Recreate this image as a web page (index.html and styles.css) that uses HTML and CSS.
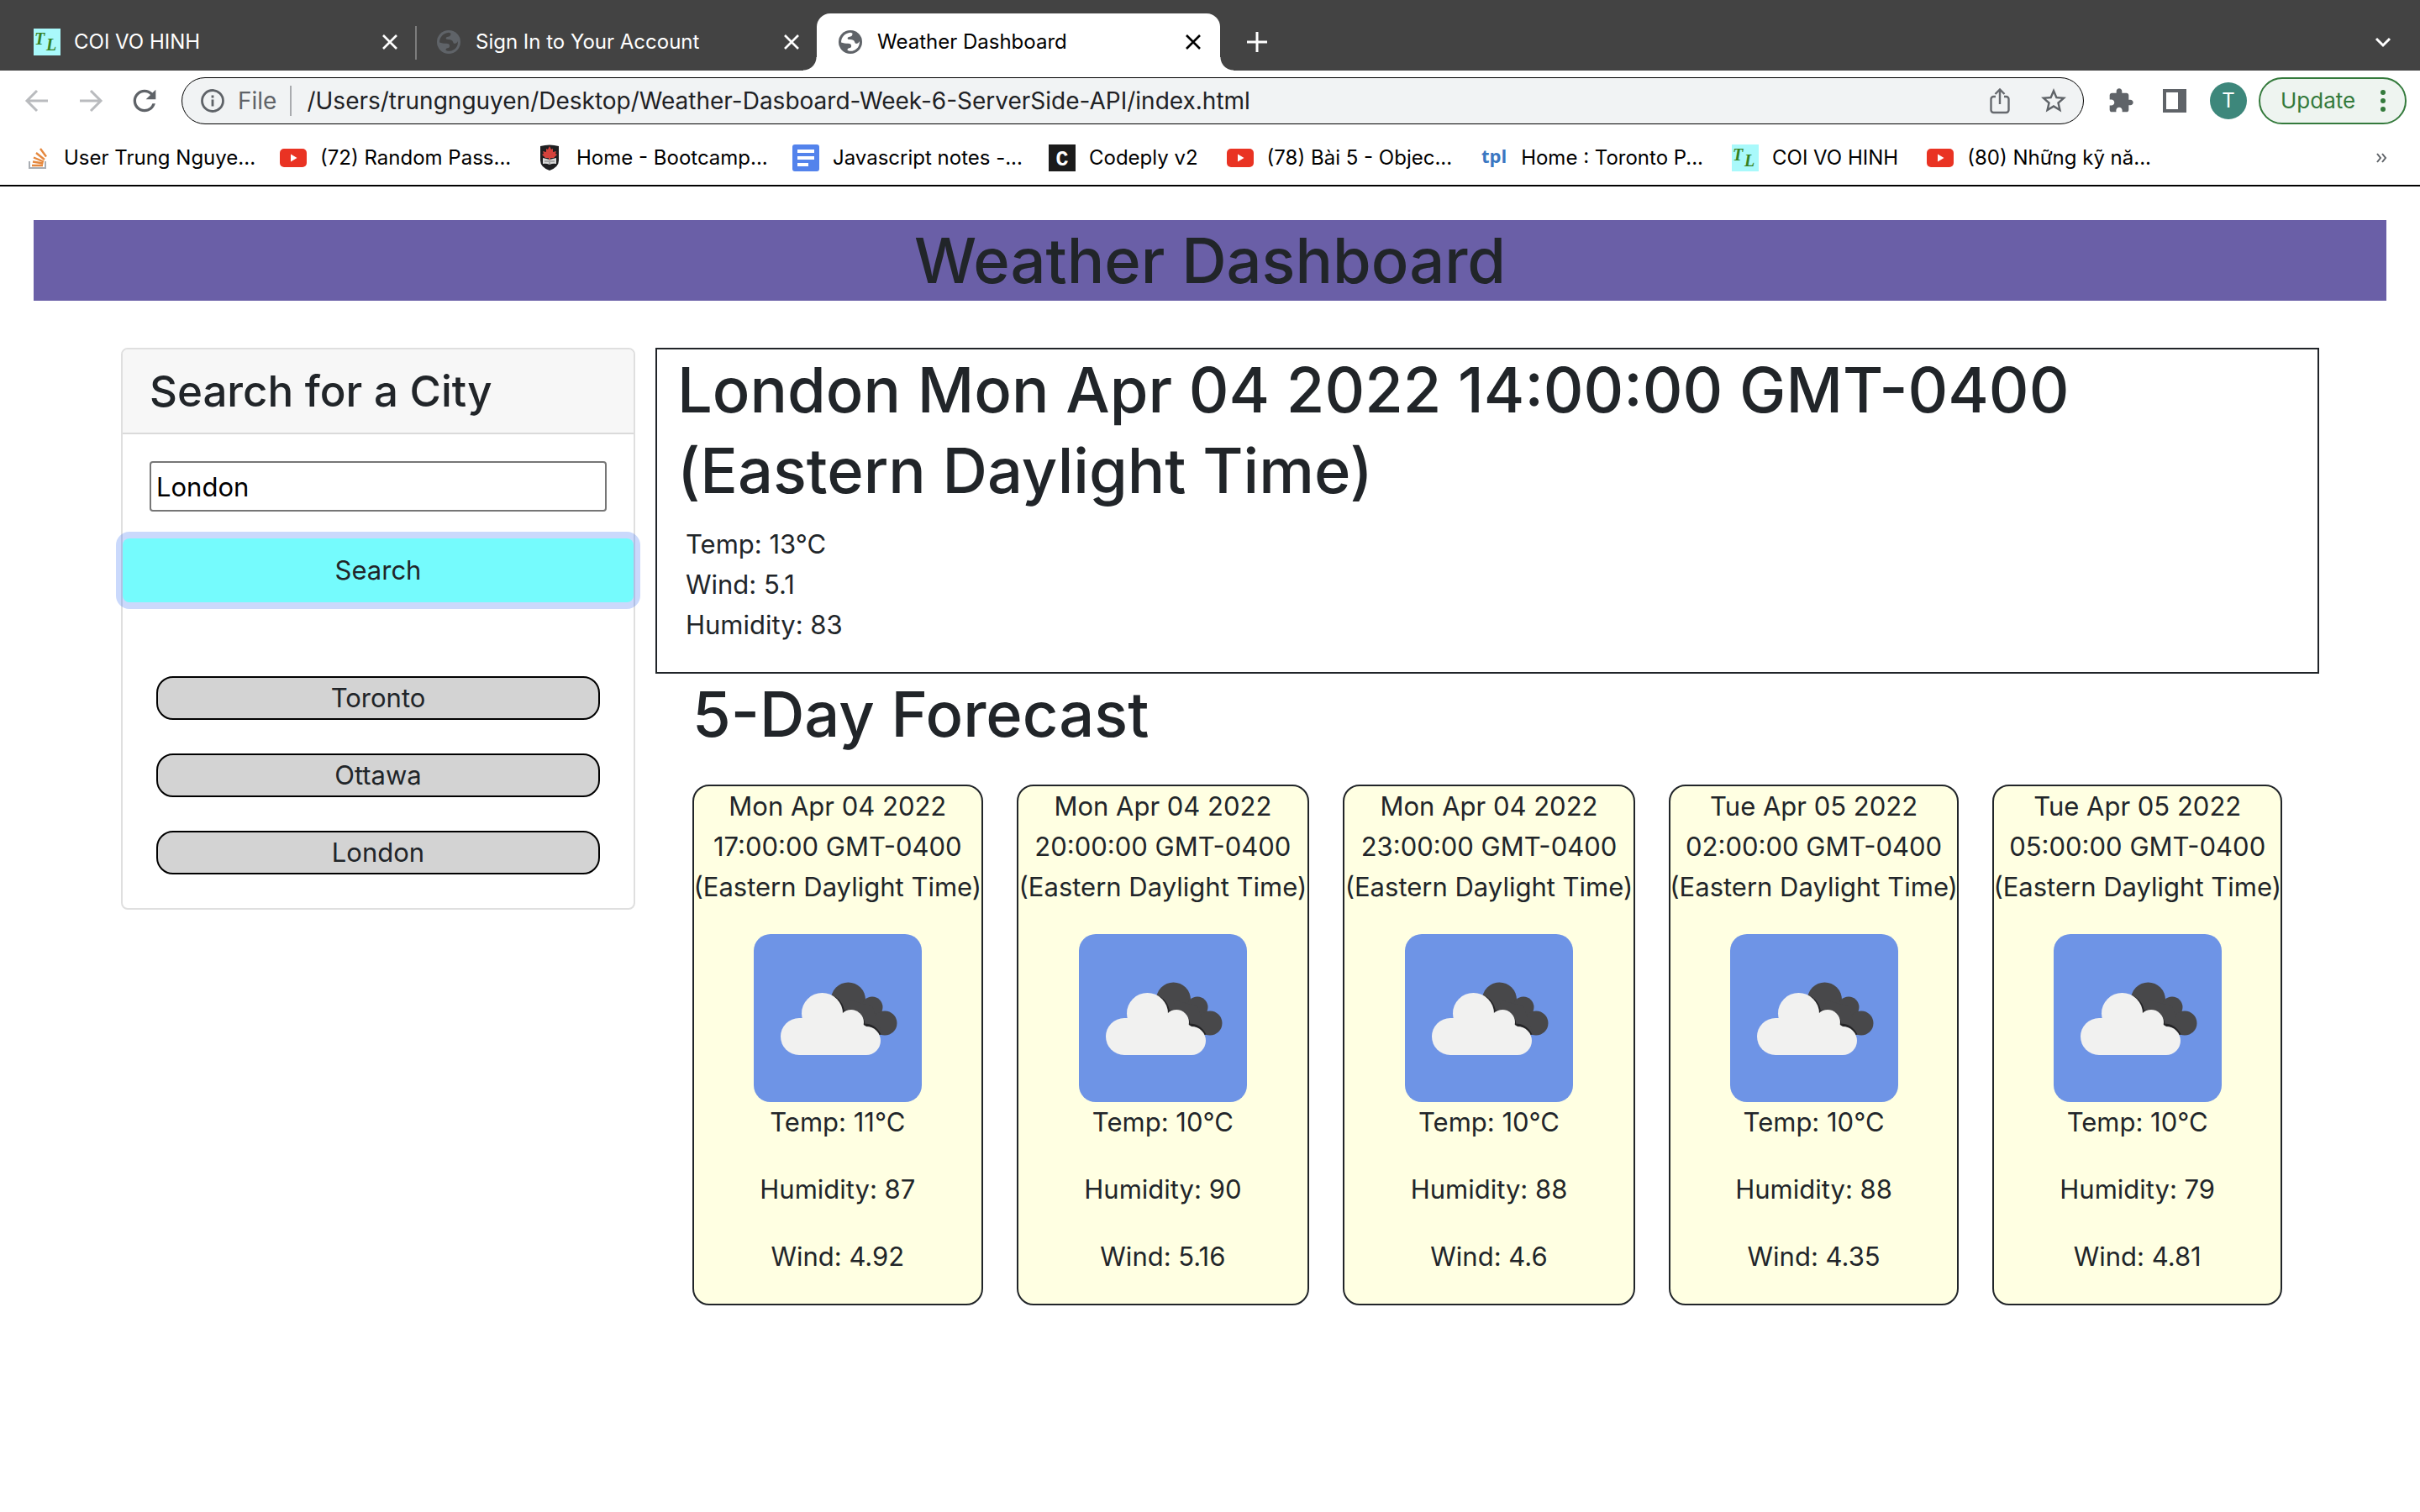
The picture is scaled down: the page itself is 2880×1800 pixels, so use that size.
FILE: index.html
```html
<!DOCTYPE html>
<html lang="en">
<head>
<meta charset="utf-8">
<meta name="viewport" content="width=device-width, initial-scale=1">
<title>Weather Dashboard</title>
<link rel="stylesheet" href="styles.css">
</head>
<body>
<svg class="sprite" aria-hidden="true">
  <symbol id="close" viewBox="0 0 20 20"><path d="M2 2l16 16M18 2L2 18" fill="none" stroke="currentColor" stroke-width="2.6"/></symbol>
  <symbol id="globe" viewBox="0 0 24 24">
    <circle class="globe-sea" cx="12" cy="12" r="12"/>
    <path class="globe-land" d="M2.6 12.4C2.6 7 6.5 3 12 2.4l2 .6c.4 1.6-.4 3-1.8 3.4-1.300.3-2.700.3-3 1.400-.3 1.200.6 1.700 2 1.700 2.600-.1 4.600.5 5.200 2.500.3 1.300 1.200 1.900 2.600 1.500 1.300-.4 2-1.500 2.200-2.600.9 5.200-2.900 10-8.400 10.300-1.800.1-3.200-.3-3.800-.8 0-1.300.6-1.800 1.800-2.100 1.700-.4 2.300-1.300 2.100-2.700-.2-1.500-1.400-2-3.200-2.100-2.800-.1-4.900-.4-7.100-1.100z"/>
  </symbol>
  <symbol id="youtube" viewBox="0 0 32 22"><rect width="32" height="22" rx="5" fill="#e93323"/><path d="M13 6.500v9l7.500-4.500z" fill="#fff"/></symbol>
  <symbol id="clouds" viewBox="0 0 200 200">
    <rect width="200" height="200" rx="20" fill="#6e94e6"/>
    <g fill="#48484a"><circle cx="112.500" cy="78" r="20.500"/><circle cx="141" cy="87" r="12.500"/><circle cx="156" cy="106" r="14.500"/><path d="M112 78l29 8 12 34-30-8z"/></g>
    <path d="M92 74c8 3 14 10 14.500 19 12-5 23 1 24.500 15 8 0 15 4 19 12" fill="none" stroke="#242426" stroke-width="3"/>
    <g fill="#f1f1f0"><circle cx="54" cy="122" r="22"/><circle cx="81.500" cy="94.500" r="24.500"/><circle cx="116" cy="105" r="15"/><circle cx="134" cy="127" r="17"/><path d="M54 100h64l16 10v34H54z"/></g>
  </symbol>
</svg>

<header class="browser">
  <div class="tabs">
    <div class="tab">
      <svg class="ico-32" viewBox="0 0 32 32"><rect width="32" height="32" fill="#a9f9fb"/><text class="monogram-text" x="1" y="19">T</text><text class="monogram-text" x="15" y="26">L</text></svg>
      <span class="tab-title">COI VO HINH</span>
      <button class="tab-close" aria-label="Close COI VO HINH"><svg class="ico-20"><use href="#close"/></svg></button>
    </div>
    <div class="tab tab-divided">
      <svg class="ico-32 globe globe-dim"><use href="#globe"/></svg>
      <span class="tab-title">Sign In to Your Account</span>
      <button class="tab-close" aria-label="Close Sign In to Your Account"><svg class="ico-20"><use href="#close"/></svg></button>
    </div>
    <div class="tab tab-active">
      <svg class="ico-32 globe"><use href="#globe"/></svg>
      <span class="tab-title">Weather Dashboard</span>
      <button class="tab-close" aria-label="Close Weather Dashboard"><svg class="ico-20"><use href="#close"/></svg></button>
    </div>
    <button class="new-tab" aria-label="New tab"><svg class="ico-24" viewBox="0 0 24 24"><path d="M12 0v24M0 12h24" stroke="#fff" stroke-width="3"/></svg></button>
    <button class="tab-menu" aria-label="Search tabs"><svg class="ico-20" viewBox="0 0 20 20"><path d="M2 6l8 8 8-8" fill="none" stroke="#fff" stroke-width="3"/></svg></button>
  </div>

  <div class="toolbar">
    <div class="nav">
      <button aria-label="Back"><svg class="ico-32" viewBox="0 0 32 32"><path d="M29 16H4M16 4L4 16l12 12" fill="none" stroke="#b9bbbe" stroke-width="3"/></svg></button>
      <button aria-label="Forward"><svg class="ico-32" viewBox="0 0 32 32"><path d="M3 16h25M16 4l12 12-12 12" fill="none" stroke="#b9bbbe" stroke-width="3"/></svg></button>
      <button aria-label="Reload"><svg class="ico-40" viewBox="0 0 24 24"><path fill="#5f6368" d="M17.650 6.350A7.958 7.958 0 0 0 12 4c-4.420 0-7.990 3.580-7.990 8s3.570 8 7.990 8c3.730 0 6.840-2.550 7.730-6h-2.080A5.990 5.990 0 0 1 12 18c-3.310 0-6-2.690-6-6s2.690-6 6-6c1.660 0 3.140.69 4.220 1.780L13 11h7V4l-2.350 2.350z"/></svg></button>
    </div>
    <div class="omnibox">
      <svg class="info" viewBox="0 0 28 28"><circle cx="14" cy="14" r="12.500" fill="none" stroke="#5f6368" stroke-width="2.800"/><path d="M14 12.500v8M14 7.500v3" stroke="#5f6368" stroke-width="2.800"/></svg>
      <label class="scheme" for="url">File</label>
      <input class="url" id="url" type="text" value="/Users/trungnguyen/Desktop/Weather-Dasboard-Week-6-ServerSide-API/index.html">
      <button aria-label="Share"><svg class="ico-32" viewBox="0 0 32 32"><path d="M11 11H8.500a3 3 0 0 0-3 3v13a3 3 0 0 0 3 3h15a3 3 0 0 0 3-3V14a3 3 0 0 0-3-3H21M16 20V3M10.500 8L16 2.500 21.500 8" fill="none" stroke="#66696e" stroke-width="2.400"/></svg></button>
      <button aria-label="Bookmark this page"><svg class="ico-36" viewBox="0 0 24 24"><path fill="#5f6368" d="M22 9.240l-7.190-.62L12 2 9.190 8.630 2 9.240l5.460 4.730L5.820 21 12 17.270 18.180 21l-1.630-7.030L22 9.240zM12 15.400l-3.760 2.270 1-4.280-3.320-2.880 4.380-.38L12 6.100l1.710 4.040 4.380.38-3.320 2.880 1 4.280L12 15.400z"/></svg></button>
    </div>
    <div class="tools">
      <button aria-label="Extensions"><svg class="ico-32" viewBox="0 0 24 24"><path fill="#5f6368" d="M20.500 11H19V7c0-1.100-.9-2-2-2h-4V3.500C13 2.120 11.880 1 10.500 1S8 2.120 8 3.500V5H4c-1.100 0-1.990.9-1.990 2v3.800H3.500c1.490 0 2.700 1.210 2.700 2.700s-1.210 2.700-2.700 2.700H2V20c0 1.100.9 2 2 2h3.800v-1.500c0-1.490 1.210-2.700 2.700-2.700 1.490 0 2.700 1.210 2.700 2.700V22H17c1.100 0 2-.9 2-2v-4h1.500c1.380 0 2.500-1.120 2.500-2.500S21.880 11 20.500 11z"/></svg></button>
      <button aria-label="Side panel"><svg class="ico-32" viewBox="0 0 32 32"><path fill="#5f6368" fill-rule="evenodd" d="M2 2h28v28H2zM6 6v20h14V6z"/></svg></button>
      <button class="avatar">T</button>
    </div>
    <button class="update">Update<svg class="dots" viewBox="0 0 8 28"><g fill="#347a3c"><circle cx="4" cy="4" r="3"/><circle cx="4" cy="14" r="3"/><circle cx="4" cy="24" r="3"/></g></svg></button>
  </div>

  <nav class="bookmarks">
    <a href="#"><svg class="ico-32" viewBox="0 0 32 32"><path d="M7 20v8h19v-8" fill="none" stroke="#a9adb3" stroke-width="2"/><path d="M10 25h13M11 20.500l12.500 2M12 15.500l12 5M15 10l10 8M20 5l7 9.500" stroke="#e5883e" stroke-width="2.400"/></svg><span class="long">User Trung Nguye...</span></a>
    <a href="#"><svg class="ico-32"><use href="#youtube"/></svg><span class="long">(72) Random Pass...</span></a>
    <a href="#"><svg class="ico-32" viewBox="0 0 32 32"><path d="M5 2q11-3 22 0v17q0 8-11 12Q5 27 5 19z" fill="#1f1f21"/><path d="M16 2l2 4 2-1v4l4-1-1 3 2 1-4 4h-4v2h-2v-2h-4l-4-4 2-1-1-3 4 1V5l2 1z" fill="#d5423c"/><path d="M8 16l8 2 8-2v7q-4-1-8 1-4-2-8-1z" fill="#d9d9d9"/><path d="M16 18v6M10 20h5M17 20h5" stroke="#777" stroke-width="1"/></svg><span class="long">Home - Bootcamp...</span></a>
    <a href="#"><svg class="ico-32" viewBox="0 0 32 32"><rect width="32" height="32" rx="3" fill="#5383ec"/><path d="M6 8h20M6 16h20M6 24h13" stroke="#fff" stroke-width="4"/></svg><span class="long">Javascript notes -...</span></a>
    <a href="#"><svg class="ico-32" viewBox="0 0 32 32"><rect width="32" height="32" fill="#1b1b1b"/><text class="c-mark" x="16" y="25">C</text></svg><span>Codeply v2</span></a>
    <a href="#"><svg class="ico-32"><use href="#youtube"/></svg><span>(78) Bài 5 - Objec...</span></a>
    <a href="#"><svg class="ico-32" viewBox="0 0 32 32"><text class="tpl-mark" x="16" y="22">tpl</text></svg><span>Home : Toronto P...</span></a>
    <a href="#"><svg class="ico-32" viewBox="0 0 32 32"><rect width="32" height="32" fill="#a9f9fb"/><text class="monogram-text" x="1" y="19">T</text><text class="monogram-text" x="15" y="26">L</text></svg><span>COI VO HINH</span></a>
    <a href="#"><svg class="ico-32"><use href="#youtube"/></svg><span>(80) Những kỹ nă...</span></a>
    <button class="more" aria-label="More bookmarks"><svg class="ico-16" viewBox="0 0 16 16"><path d="M3 3l4 5-4 5M9 3l4 5-4 5" fill="none" stroke="#5f6368" stroke-width="2"/></svg></button>
  </nav>
</header>

<main class="page">
  <h1 class="banner">Weather Dashboard</h1>
  <div class="columns">
    <aside class="search-card">
      <h3 class="search-head"><label for="city">Search for a City</label></h3>
      <div class="search-body"><input class="city" id="city" type="text" value="London"></div>
      <button class="search-btn">Search</button>
      <ul class="history">
        <li><button>Toronto</button></li>
        <li><button>Ottawa</button></li>
        <li><button>London</button></li>
      </ul>
    </aside>
    <div class="results">
      <section class="current">
        <h1>London Mon Apr 04 2022 14:00:00 GMT-0400 (Eastern Daylight Time)</h1>
        <p>Temp: 13°C</p>
        <p>Wind: 5.1</p>
        <p>Humidity: 83</p>
      </section>
      <section class="forecast">
        <h1>5-Day Forecast</h1>
        <div class="days">
          <article class="day"><p>Mon Apr 04 2022<br>17:00:00 GMT-0400<br>(Eastern Daylight Time)</p><svg role="img" aria-label="Broken clouds"><use href="#clouds"/></svg><p>Temp: 11°C</p><p>Humidity: 87</p><p>Wind: 4.92</p></article>
          <article class="day"><p>Mon Apr 04 2022<br>20:00:00 GMT-0400<br>(Eastern Daylight Time)</p><svg role="img" aria-label="Broken clouds"><use href="#clouds"/></svg><p>Temp: 10°C</p><p>Humidity: 90</p><p>Wind: 5.16</p></article>
          <article class="day"><p>Mon Apr 04 2022<br>23:00:00 GMT-0400<br>(Eastern Daylight Time)</p><svg role="img" aria-label="Broken clouds"><use href="#clouds"/></svg><p>Temp: 10°C</p><p>Humidity: 88</p><p>Wind: 4.6</p></article>
          <article class="day"><p>Tue Apr 05 2022<br>02:00:00 GMT-0400<br>(Eastern Daylight Time)</p><svg role="img" aria-label="Broken clouds"><use href="#clouds"/></svg><p>Temp: 10°C</p><p>Humidity: 88</p><p>Wind: 4.35</p></article>
          <article class="day"><p>Tue Apr 05 2022<br>05:00:00 GMT-0400<br>(Eastern Daylight Time)</p><svg role="img" aria-label="Broken clouds"><use href="#clouds"/></svg><p>Temp: 10°C</p><p>Humidity: 79</p><p>Wind: 4.81</p></article>
        </div>
      </section>
    </div>
  </div>
</main>
</body>
</html>
```
FILE: styles.css
```css
* { box-sizing: border-box; }

body {
  margin: 0;
  background: #fff;
  color: #212529;
  font: 400 31px/48px Inter, "Liberation Sans", sans-serif;
}

h1, h3, p, ul { margin: 0; padding: 0; }
ul { list-style: none; }

button {
  margin: 0;
  padding: 0;
  border: 0;
  background: none;
  color: inherit;
  font: inherit;
}

input { margin: 0; font: inherit; }
svg { display: block; flex: none; }

.sprite { position: absolute; width: 0; height: 0; }
.ico-16 { width: 16px; height: 16px; }
.ico-20 { width: 20px; height: 20px; }
.ico-24 { width: 24px; height: 24px; }
.ico-32 { width: 32px; height: 32px; }
.ico-36 { width: 36px; height: 36px; }
.ico-40 { width: 40px; height: 40px; }

/* Tab strip */
.tabs {
  display: flex;
  align-items: stretch;
  height: 84px;
  padding: 16px 34px 0 16px;
  background: #434343;
  color: #fff;
  font-size: 24px;
  line-height: 32px;
}

.tab {
  position: relative;
  display: flex;
  align-items: center;
  gap: 16px;
  width: 478px;
  padding: 0 20px 0 24px;
}

.tab-title { flex: 1; white-space: nowrap; }

.tab-divided::before {
  content: "";
  position: absolute;
  left: 0;
  top: 15px;
  width: 2px;
  height: 40px;
  background: #7d7d7d;
}

.tab-active {
  width: 480px;
  padding-right: 22px;
  border-radius: 16px 16px 0 0;
  background: #fff;
  color: #000;
}

.tab-active::before,
.tab-active::after {
  content: "";
  position: absolute;
  bottom: 0;
  width: 16px;
  height: 16px;
}

.tab-active::before { right: 100%; background: radial-gradient(circle at 0 0, #434343 15px, #fff 16px); }
.tab-active::after { left: 100%; background: radial-gradient(circle at 100% 0, #434343 15px, #fff 16px); }

.globe { padding: 2px; --sea: #5f6368; --land: #fff; }
.globe-dim { --land: #434343; }
.globe-sea { fill: var(--sea); }
.globe-land { fill: var(--land); }

.new-tab { margin-left: 32px; }
.tab-menu { margin-left: auto; }

.monogram-text { fill: #35811f; font: italic 700 20px "Liberation Serif", serif; }
.c-mark { fill: #fff; font: 700 25px "Liberation Mono", monospace; text-anchor: middle; }
.tpl-mark { fill: #3a77c2; font: 700 22px "Open Sans", sans-serif; text-anchor: middle; }

/* Toolbar */
.toolbar {
  display: flex;
  align-items: center;
  padding: 8px 16px 8px 28px;
}

.nav { display: flex; align-items: center; gap: 32px; padding-right: 24px; }
.nav button:last-child { margin-left: -4px; }

.omnibox {
  display: flex;
  flex: 1;
  align-items: center;
  height: 56px;
  padding: 0 17px 0 22px;
  border: 1px solid #000;
  border-radius: 28px;
  background: #f1f3f4;
  font-size: 28px;
  line-height: 36px;
}

.info { width: 28px; height: 28px; }

.scheme {
  margin-left: 16px;
  padding-right: 16px;
  border-right: 2px solid #a9abae;
  color: #5f6368;
}

.url {
  flex: 1;
  min-width: 0;
  padding: 0 0 0 18px;
  border: 0;
  background: none;
  color: #202124;
}

.omnibox button + button { margin-left: 30px; }

.tools { display: flex; align-items: center; gap: 32px; padding: 0 14px 0 28px; }

.avatar {
  width: 44px;
  height: 44px;
  margin-left: -6px;
  border-radius: 50%;
  background: #3d877b;
  color: #fff;
  font-size: 24px;
  line-height: 44px;
}

.update {
  display: flex;
  align-items: center;
  justify-content: space-between;
  width: 176px;
  height: 56px;
  padding: 0 22px 0 24px;
  border: 2px solid #347a3c;
  border-radius: 28px;
  background: #eef4f0;
  color: #347a3c;
  font-size: 26px;
}

.dots { width: 8px; height: 28px; }

/* Bookmarks bar */
.bookmarks {
  display: flex;
  align-items: center;
  gap: 34px;
  height: 66px;
  padding: 0 38px 0 28px;
  border-bottom: 2px solid #000;
  font-size: 24px;
  line-height: 32px;
}

.bookmarks a {
  display: flex;
  align-items: center;
  gap: 16px;
  color: #000;
  text-decoration: none;
  white-space: nowrap;
}

.long { width: 223px; }
.more { margin-left: auto; }

/* Page */
.page { padding: 40px; }

.banner {
  background: #6a5fa7;
  text-align: center;
}

h1 { font-size: 74px; font-weight: 500; line-height: 96px; }

.columns {
  display: grid;
  grid-template-columns: minmax(0, 612fr) minmax(0, 1980fr);
  align-items: start;
  gap: 24px;
  padding: 56px 80px 0 104px;
}

.search-card {
  border: 2px solid #dfdfdf;
  border-radius: 8px;
}

.search-head {
  padding: 16px 32px;
  border-bottom: 2px solid #dadada;
  border-radius: 6px 6px 0 0;
  background: #f7f7f7;
  font-size: 51px;
  font-weight: 500;
  line-height: 67px;
}

.search-body { padding: 32px; }

.city {
  display: block;
  width: 100%;
  height: 60px;
  padding: 2px 6px;
  border: 2px solid #767676;
  border-radius: 4px;
  background: #fff;
  color: #000;
}

.search-btn {
  display: block;
  width: 100%;
  height: 76px;
  border-radius: 8px;
  background: #75fbfd;
  box-shadow: 0 0 0 8px rgba(43, 103, 243, 0.25);
}

.history {
  display: grid;
  gap: 40px;
  padding: 88px 40px 40px;
}

.history button {
  display: block;
  width: 100%;
  height: 52px;
  border: 2px solid #000;
  border-radius: 20px;
  background: #d3d3d3;
}

.current {
  padding: 0 34px 32px;
  border: 2px solid #212529;
}

.current h1 { margin: 0 -10px 16px; }

.forecast { padding: 0 44px; }
.forecast h1 { margin-bottom: 36px; }

.days {
  display: grid;
  grid-template-columns: minmax(0, 346fr) minmax(0, 349fr) minmax(0, 348fr) minmax(0, 346fr) minmax(0, 345fr);
  gap: 40px;
}

.day {
  display: flex;
  flex-direction: column;
  align-items: center;
  border: 2px solid #212529;
  border-radius: 20px;
  background: #ffffe2;
  text-align: center;
  white-space: nowrap;
}

.day p { margin-bottom: 32px; }
.day svg { width: 200px; height: 200px; }
```
